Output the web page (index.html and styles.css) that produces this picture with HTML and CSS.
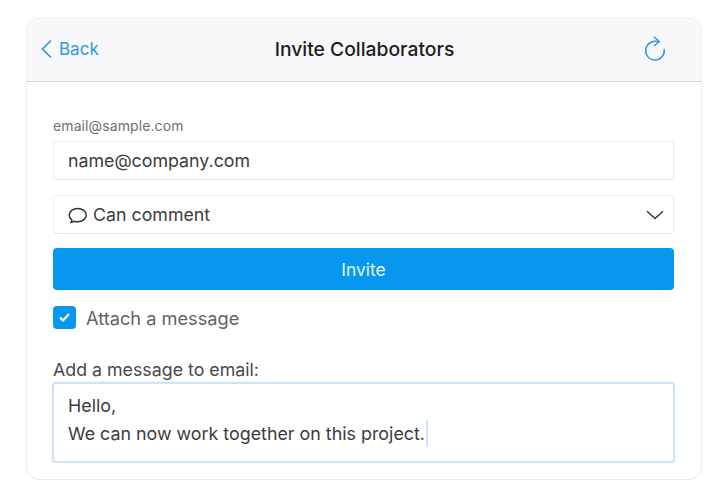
FILE: index.html
```html
<!DOCTYPE html>
<html lang="en">
<head>
<meta charset="utf-8">
<title>Invite Collaborators</title>
<link rel="stylesheet" href="styles.css">
</head>
<body>
<main class="card">
  <header class="head">
    <a class="back">
      <svg class="back-icon" width="13" height="20" viewBox="0 0 13 20"><path d="M11 1.500 2.500 10l8.500 8.500" fill="none" stroke="#2a9bdc" stroke-width="1.700"/></svg>
      <span>Back</span>
    </a>
    <h1 class="title">Invite Collaborators</h1>
    <svg class="refresh" width="24" height="26" viewBox="0 0 24 26"><path d="M15.500 6.100A9.300 9.300 0 1 0 21.200 13.500" fill="none" stroke="#2a9bdc" stroke-width="1.500" stroke-linecap="round"/><path d="M11 .7 16.300 5.700 11 10" fill="none" stroke="#2a9bdc" stroke-width="1.400"/></svg>
  </header>
  <div class="body">
    <label class="small-label">email@sample.com</label>
    <div class="field input">name@company.com</div>
    <div class="field select">
      <span class="select-value">
        <svg width="20" height="18" viewBox="0 0 20 18"><path d="M2.800 16.500c1.400 0 2.600-.5 3.500-1.300 1 .4 2.200.6 3.400.6 4.800 0 8.500-2.900 8.500-6.700S14.500 2.400 9.700 2.400 1.200 5.300 1.200 9.100c0 2 1 3.800 2.700 5 .1.900-.4 1.700-1.100 2.400z" fill="none" stroke="#333" stroke-width="1.500" stroke-linejoin="round"/></svg>
        Can comment
      </span>
      <svg class="chevron" width="18" height="10" viewBox="0 0 18 10"><path d="M1 1.300 9 8.500l8-7.200" fill="none" stroke="#333" stroke-width="1.400"/></svg>
    </div>
    <button class="invite" type="button">Invite</button>
    <div class="attach">
      <span class="checkbox"><svg width="13" height="11" viewBox="0 0 13 11"><path d="M2 5.500 5 8.500 11 2" fill="none" stroke="#fff" stroke-width="2.200"/></svg></span>
      <span>Attach a message</span>
    </div>
    <label class="msg-label">Add a message to email:</label>
    <div class="message">
      <div>Hello,</div>
      <div>We can now work together on this project.<span class="caret"></span></div>
    </div>
  </div>
</main>
</body>
</html>
```

FILE: styles.css
```css
* { box-sizing: border-box; }
html, body { margin: 0; background: #fff; }
body {
  padding: 18px 25px 0 26px;
  font-family: Inter, "Liberation Sans", sans-serif;
  color: #3c3c3e;
}
.card {
  width: 676px;
  height: 462px;
  border: 1px solid #ececee;
  border-radius: 13px;
  overflow: hidden;
}
.head {
  height: 63px;
  background: #f8f7f9;
  border-bottom: 1px solid #d9d9db;
  display: flex;
  align-items: center;
  justify-content: space-between;
  padding: 0 34px 2px 13px;
}
.back {
  width: 148px;
  display: flex;
  align-items: center;
  gap: 6px;
  color: #2a9bdc;
  font-size: 17px;
}
.title {
  margin: 0;
  font-size: 19.300px;
  font-weight: 500;
  color: #1c1c1e;
}
.refresh { margin-left: 102px; }
.body {
  padding: 36px 27px 0 26px;
  display: flex;
  flex-direction: column;
}
.small-label {
  font-size: 14px;
  line-height: 16px;
  color: #6f6f72;
  margin-bottom: 7px;
  letter-spacing: 0.1px;
}
.field {
  height: 39px;
  background: #fff;
  border: 1px solid #eeeeef;
  border-bottom-color: #e6e6e8;
  border-radius: 4px;
  display: flex;
  align-items: center;
  padding: 0 14px;
  font-size: 17.800px;
  color: #3c3c3e;
}
.select {
  margin-top: 15px;
  justify-content: space-between;
  padding-right: 9px;
}
.select-value { display: flex; align-items: center; gap: 5px; }
.invite {
  margin-top: 14px;
  height: 42px;
  border: 0;
  border-radius: 4px;
  background: #0897ef;
  color: #e6f4fe;
  font: 400 17.400px Inter, "Liberation Sans", sans-serif;
}
.attach {
  margin-top: 16px;
  display: flex;
  align-items: center;
  gap: 10px;
  font-size: 18.200px;
  color: #636366;
}
.checkbox {
  width: 23px;
  height: 23px;
  border-radius: 4px;
  background: #0897ef;
  display: flex;
  align-items: center;
  justify-content: center;
}
.msg-label {
  margin-top: 30px;
  font-size: 17.800px;
  line-height: 21px;
  color: #48484a;
}
.message {
  margin: 2px -1px 0;
  height: 81px;
  background: #fff;
  border: 2px solid #cfe2f6;
  border-radius: 4px;
  box-shadow: 0 0 2px #dce9f8;
  padding: 8px 14px;
  font-size: 17.850px;
  line-height: 28px;
  color: #3c3c3e;
}
.caret {
  display: inline-block;
  width: 2px;
  height: 27px;
  margin-left: 1px;
  vertical-align: -7px;
  background: #cfe2f6;
}
```
